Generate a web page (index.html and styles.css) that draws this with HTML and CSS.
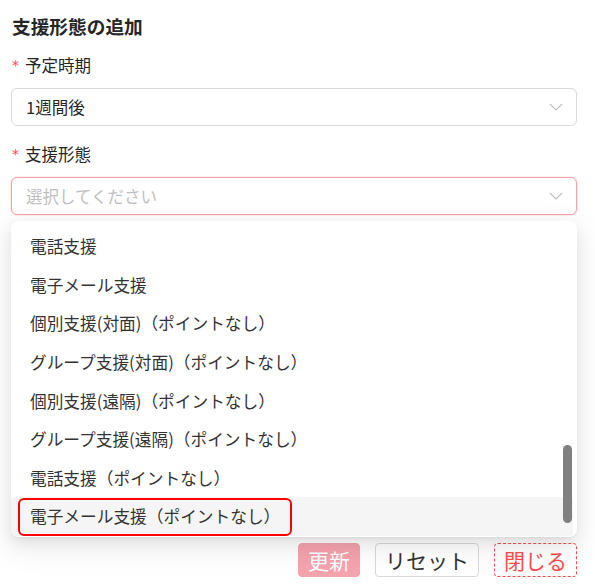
FILE: index.html
```html
<!DOCTYPE html>
<html lang="ja">
<head>
<meta charset="utf-8">
<link rel="stylesheet" href="styles.css">
</head>
<body>
<div class="panel">
  <h2 class="title">支援形態の追加</h2>
  <div class="field">
    <div class="label"><span class="req">*</span>予定時期</div>
    <div class="select">
      <span class="value">1週間後</span>
      <svg class="chev" width="14" height="8" viewBox="0 0 14 8"><path d="M1 1 L7 7 L13 1" fill="none" stroke="#bfbfbf" stroke-width="1.2"/></svg>
    </div>
  </div>
  <div class="field second">
    <div class="label"><span class="req">*</span>支援形態</div>
    <div class="select error">
      <span class="placeholder">選択してください</span>
      <svg class="chev" width="14" height="8" viewBox="0 0 14 8"><path d="M1 1 L7 7 L13 1" fill="none" stroke="#bfbfbf" stroke-width="1.2"/></svg>
    </div>
  </div>
  <div class="dropdown">
    <ul class="options">
      <li>電話支援</li>
      <li>電子メール支援</li>
      <li>個別支援(対面)（ポイントなし）</li>
      <li>グループ支援(対面)（ポイントなし）</li>
      <li>個別支援(遠隔)（ポイントなし）</li>
      <li>グループ支援(遠隔)（ポイントなし）</li>
      <li>電話支援（ポイントなし）</li>
      <li class="active">電子メール支援（ポイントなし）</li>
    </ul>
    <div class="thumb"></div>
    <div class="mark"></div>
  </div>
  <div class="actions">
    <button class="btn primary">更新</button>
    <button class="btn">リセット</button>
    <button class="btn danger">閉じる</button>
  </div>
</div>
</body>
</html>
```

FILE: styles.css
```css
* { box-sizing: border-box; }
html, body { margin: 0; padding: 0; background: #fff; }
body {
  font-family: "Noto Sans CJK JP", "Noto Sans", sans-serif;
  color: #262626;
}
.panel {
  width: 595px;
  height: 588px;
  padding: 13px 18px 0 11px;
}
.title {
  margin: 0 0 0 1px;
  font-size: 18.7px;
  line-height: 26px;
  font-weight: 700;
  color: #262626;
}
.field { margin-top: 13px; }
.field.second { margin-top: 15px; }
.label {
  font-size: 16.5px;
  line-height: 26px;
  color: #262626;
  margin-left: 1px;
  display: flex;
  align-items: center;
}
.req {
  color: #ff4d4f;
  font-size: 14px;
  margin-right: 6px;
  font-family: "DejaVu Sans", sans-serif;
}
.select {
  margin-top: 10px;
  height: 38px;
  border: 1px solid #d9d9d9;
  border-radius: 6px;
  display: flex;
  align-items: center;
  justify-content: space-between;
  padding: 0 13px 0 14px;
  font-size: 16.5px;
  background: #fff;
}
.select.error {
  border-color: #f4a2aa;
  box-shadow: 0 0 0 1px rgba(255, 200, 205, 0.35);
}
.value { color: #262626; }
.placeholder { color: #bfbfbf; }
.chev { display: block; }
.dropdown {
  position: relative;
  margin-top: 6px;
  height: 316px;
  background: #fff;
  border-radius: 8px;
  box-shadow: 0 6px 16px rgba(0,0,0,0.08), 0 3px 6px -4px rgba(0,0,0,0.12), 0 9px 28px 8px rgba(0,0,0,0.05);
  padding: 6px 4px 0 0;
  overflow: hidden;
}
.options {
  list-style: none;
  margin: 0;
  padding: 0;
}
.options li {
  height: 38.6px;
  display: flex;
  align-items: center;
  padding-left: 19px;
  font-size: 16.7px;
  color: #333;
  border-radius: 4px;
}
.options li.active { background: #f5f5f5; }
.thumb {
  position: absolute;
  right: 5px;
  top: 224px;
  width: 9px;
  height: 78px;
  border-radius: 5px;
  background: #808080;
}
.mark {
  position: absolute;
  left: 7px;
  top: 277px;
  width: 274px;
  height: 38px;
  border: 2px solid #f00;
  border-radius: 6px;
}
.actions {
  display: flex;
  justify-content: flex-end;
  gap: 15px;
  margin-top: 6px;
}
.btn {
  height: 34px;
  padding: 0 9px;
  font-family: "Noto Sans CJK JP", sans-serif;
  font-size: 21px;
  line-height: 1;
  border: 1px solid #d9d9d9;
  border-radius: 4px;
  background: #fff;
  color: #333;
}
.btn.primary {
  background: #f5a3ad;
  border-color: #f5a3ad;
  color: #fff;
}
.btn.danger {
  border: 1px dashed #ff4d4f;
  color: #ff4d4f;
  background: #fff;
}
```
